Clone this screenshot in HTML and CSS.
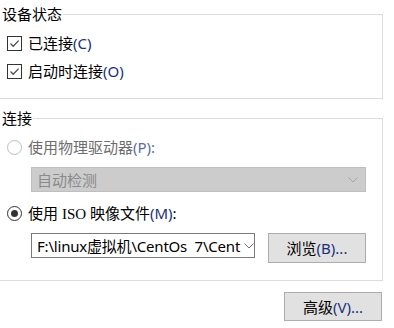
FILE: index.html
```html
<!DOCTYPE html>
<html lang="zh-CN">
<head>
<meta charset="utf-8">
<title>设备状态</title>
<link rel="stylesheet" href="styles.css">
</head>
<body>
<div class="page">
  <fieldset class="group g1">
    <legend>设备状态</legend>
    <div class="row">
      <span class="cb"><svg viewBox="0 0 13 13" width="13" height="13"><path d="M2.5 6.5 L5.2 9.2 L10.6 3.6" fill="none" stroke="#4d4d4d" stroke-width="1.3"/></svg></span>
      <span class="lbl">已连接<span class="mn">(C)</span></span>
    </div>
    <div class="row">
      <span class="cb"><svg viewBox="0 0 13 13" width="13" height="13"><path d="M2.5 6.5 L5.2 9.2 L10.6 3.6" fill="none" stroke="#4d4d4d" stroke-width="1.3"/></svg></span>
      <span class="lbl">启动时连接<span class="mn">(O)</span></span>
    </div>
  </fieldset>

  <fieldset class="group g2">
    <legend>连接</legend>
    <div class="row disabled">
      <span class="radio"></span>
      <span class="lbl">使用物理驱动器<span class="mn">(P)</span>:</span>
    </div>
    <div class="select sel-disabled">
      <span class="val">自动检测</span>
      <svg class="chev" viewBox="0 0 10 6" width="10" height="6"><path d="M0.5 0.5 L5 5 L9.5 0.5" fill="none" stroke="#a6a6a6" stroke-width="1"/></svg>
    </div>
    <div class="row">
      <span class="radio on"></span>
      <span class="lbl">使用 <span class="iso">ISO</span> 映像文件<span class="mn">(M)</span>:</span>
    </div>
    <div class="pathrow">
      <div class="select path">
        <span class="val">F:\linux虚拟机\CentOs&nbsp;&nbsp;7\Cent</span>
        <svg class="chev" viewBox="0 0 10 6" width="10" height="6"><path d="M0.5 0.5 L5 5 L9.5 0.5" fill="none" stroke="#707070" stroke-width="1"/></svg>
      </div>
      <div class="btn browse"><span class="btxt">浏览<span class="mn">(B)...</span></span></div>
    </div>
  </fieldset>

  <div class="actions">
    <div class="btn"><span class="btxt">高级<span class="mn">(V)...</span></span></div>
  </div>
</div>
</body>
</html>
```

FILE: styles.css
```css
html, body {
  margin: 0;
  padding: 0;
  background: #ffffff;
}
body {
  font-family: "Noto Sans", "Noto Sans CJK SC", sans-serif;
  font-size: 15px;
  color: #000000;
  line-height: 20px;
}
.page {
  width: 394px;
  display: flex;
  flex-direction: column;
}
.group {
  width: 383px;
  box-sizing: border-box;
  margin: 0;
  padding: 0;
  border: 1px solid #dcdcdc;
  border-left: none;
  min-inline-size: 0;
}
.group legend {
  padding: 0 1px 0 2px;
  margin: 0;
  line-height: 20px;
  height: 20px;
  font-size: 15px;
  color: #000;
}
.g1 {
  margin-top: 4px;
  padding-top: 5px;
  padding-bottom: 13px;
}
.g2 {
  margin-top: 9px;
  padding-top: 5px;
  padding-bottom: 17px;
}
.row {
  height: 28px;
  display: flex;
  align-items: center;
  padding-left: 7px;
}
.lbl {
  margin-left: 6px;
  white-space: nowrap;
}
.mn {
  color: #1b2f78;
}
.iso {
  font-family: "Liberation Serif", serif;
}
.cb {
  width: 13px;
  height: 13px;
  border: 1px solid #333333;
  background: #fff;
  display: flex;
}
.radio {
  width: 13px;
  height: 13px;
  border: 1px solid #333333;
  border-radius: 50%;
  background: #fff;
  display: flex;
  align-items: center;
  justify-content: center;
}
.radio.on::after {
  content: "";
  width: 7px;
  height: 7px;
  border-radius: 50%;
  background: #333333;
}
.disabled .radio {
  border-color: #bcbcbc;
}
.disabled .lbl {
  color: #6d6d6d;
}
.disabled .mn {
  color: #5a6c9c;
}
.select {
  box-sizing: border-box;
  height: 25px;
  display: flex;
  align-items: center;
  padding-left: 5px;
  padding-right: 7px;
  overflow: hidden;
}
.select .val {
  flex: 1;
  white-space: nowrap;
}
.chev {
  flex: none;
  margin-left: 4px;
}
.sel-disabled {
  margin-left: 31px;
  margin-top: 6px;
  width: 335px;
  background: #cccccc;
  border: 1px solid #bfbfbf;
  color: #8a8a8a;
}
.pathrow {
  margin-top: 6px;
}
.sel-disabled + .row {
  margin-top: 7px;
}
.pathrow {
  display: flex;
  align-items: flex-start;
  padding-left: 31px;
}
.path {
  width: 224px;
  background: #fff;
  border: 1px solid #7a7a7a;
  color: #000;
  letter-spacing: -0.2px;
}
.btn {
  box-sizing: border-box;
  width: 98px;
  height: 29px;
  background: #e1e1e1;
  border: 1px solid #adadad;
  display: flex;
  align-items: center;
  justify-content: center;
  white-space: nowrap;
}
.browse {
  margin-left: 13px;
  height: 30px;
}
.actions {
  width: 382px;
  display: flex;
  justify-content: flex-end;
  margin-top: 11px;
}
```
